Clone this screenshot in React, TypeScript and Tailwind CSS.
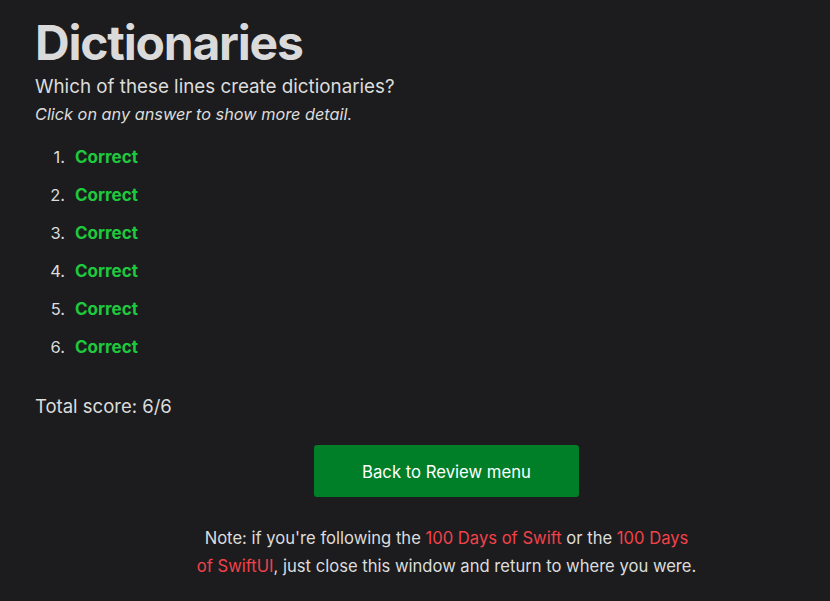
import React from "react";

export default function App() {
  const items = [1, 2, 3, 4, 5, 6];
  return (
    <div className="min-h-[601px] w-full bg-[#1c1c1e] text-[#dcdcdc] font-['Inter',sans-serif]">
      <div className="pl-[35px] pt-[14px]">
        <h1 className="text-[48px] font-bold leading-[58px] text-[#dadada] tracking-[-1.2px]">Dictionaries</h1>
        <p className="text-[18.8px] leading-[26px] mt-[2px]">Which of these lines create dictionaries?</p>
        <p className="text-[16.3px] italic leading-[24px] mt-[2px]">Click on any answer to show more detail.</p>
        <ol className="mt-[19px] flex flex-col gap-[14px]">
          {items.map((n) => (
            <li key={n} className="flex text-[16.5px] leading-[24px]">
              <span className="w-[30px] text-right">{n}.</span>
              <span className="ml-[10px] font-bold text-[#1ec93d] text-[17px]">Correct</span>
            </li>
          ))}
        </ol>
        <p className="mt-[34px] text-[18.5px] leading-[26px]">Total score: 6/6</p>
        <div className="pl-[28px] flex flex-col items-center mt-[26px]">
          <button className="w-[265px] h-[52px] rounded-[3px] bg-[#017f28] text-white text-[16.7px] pt-[3px]">
            Back to Review menu
          </button>
          <p className="mt-[27px] w-[502px] text-center text-[16.6px] leading-[28px] text-[#dcdcdc]">
            Note: if you're following the <span className="text-[#f2424a]">100 Days of Swift</span> or the{" "}
            <span className="text-[#f2424a]">100 Days of SwiftUI</span>, just close this window and return to where you were.
          </p>
        </div>
      </div>
    </div>
  );
}
